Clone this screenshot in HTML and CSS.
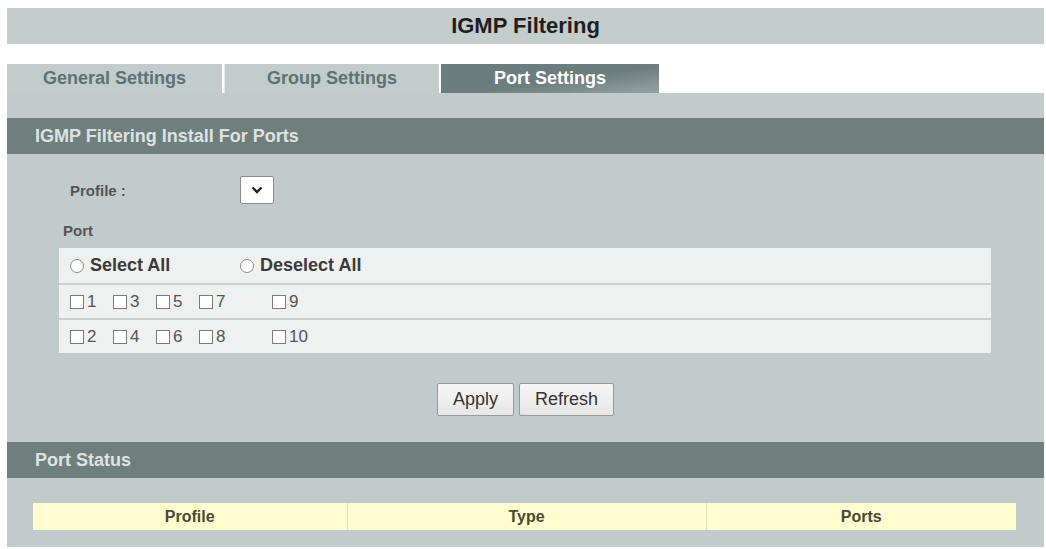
FILE: index.html
```html
<!DOCTYPE html>
<html lang="en">
<head>
    <meta charset="UTF-8">
    <title>IGMP Filtering</title>
    <link rel="stylesheet" href="styles.css">
</head>
<body>
    <div class="page">
        <h1 class="title">IGMP Filtering</h1>

        <ul class="tabs">
            <li>General Settings</li>
            <li>Group Settings</li>
            <li class="active">Port Settings</li>
        </ul>

        <div class="panel">
            <h2 class="section-head">IGMP Filtering Install For Ports</h2>

            <div class="profile-row">
                <span class="label">Profile :</span>
                <span class="select">
                    <svg width="14" height="10" viewBox="0 0 14 10"><polyline points="2.5,2.5 7,7 11.5,2.5" fill="none" stroke="#222" stroke-width="2.4"/></svg>
                </span>
            </div>

            <div class="port-label">Port</div>

            <div class="port-table">
                <div class="port-row">
                    <label class="radio-item"><span class="radio"></span>Select All</label>
                    <label class="radio-item"><span class="radio"></span>Deselect All</label>
                </div>
                <div class="port-row">
                    <label class="check-item"><span class="box"></span>1</label>
                    <label class="check-item"><span class="box"></span>3</label>
                    <label class="check-item"><span class="box"></span>5</label>
                    <label class="check-item"><span class="box"></span>7</label>
                    <label class="check-item far"><span class="box"></span>9</label>
                </div>
                <div class="port-row">
                    <label class="check-item"><span class="box"></span>2</label>
                    <label class="check-item"><span class="box"></span>4</label>
                    <label class="check-item"><span class="box"></span>6</label>
                    <label class="check-item"><span class="box"></span>8</label>
                    <label class="check-item far"><span class="box"></span>10</label>
                </div>
            </div>

            <div class="actions">
                <button type="button">Apply</button>
                <button type="button">Refresh</button>
            </div>

            <h2 class="section-head">Port Status</h2>

            <div class="status-wrap">
                <table class="status">
                    <tr>
                        <th class="c1">Profile</th>
                        <th class="c2">Type</th>
                        <th class="c3">Ports</th>
                    </tr>
                </table>
            </div>
        </div>
    </div>
</body>
</html>
```

FILE: styles.css
```css
* {
    margin: 0;
    padding: 0;
    box-sizing: border-box;
}

body {
    margin: 8px 2px 0 7px;
    background: #fff;
    font-family: 'Liberation Sans', Arial, sans-serif;
    color: #333;
}

.page {
    width: 1037px;
}

.title {
    height: 36px;
    line-height: 36px;
    background: #c4cccc;
    text-align: center;
    font-size: 22px;
    font-weight: bold;
    color: #1e1e1e;
}

.tabs {
    list-style: none;
    display: flex;
    gap: 2px;
    margin-top: 20px;
    height: 29px;
}

.tabs li {
    width: 215px;
    line-height: 29px;
    text-align: center;
    font-size: 18px;
    font-weight: bold;
    color: #5c7373;
    background: #c3cbcb;
}

.tabs li + li {
    border-left: 1px solid #e4e9e9;
}

.tabs li.active {
    width: 218px;
    color: #fff;
    border-left: none;
    background: linear-gradient(172deg, #6c7d7d 55%, #95a3a3);
}

.panel {
    background: #c2cbcb;
    padding: 25px 0 17px;
}

.section-head {
    height: 36px;
    line-height: 36px;
    padding-left: 28px;
    background: #6f7f7e;
    color: #dde3e3;
    font-size: 18px;
    font-weight: bold;
}

.profile-row {
    display: flex;
    align-items: center;
    margin-top: 22px;
    height: 28px;
    padding-left: 63px;
}

.profile-row .label {
    width: 170px;
    font-size: 15px;
    font-weight: bold;
    color: #555;
}

.select {
    width: 34px;
    height: 28px;
    display: flex;
    align-items: center;
    justify-content: center;
    background: #fff;
    border: 1px solid #8c8c8c;
    border-radius: 2px;
}

.port-label {
    margin-top: 17px;
    padding-left: 56px;
    line-height: 20px;
    font-size: 15px;
    font-weight: bold;
    color: #555;
}

.port-table {
    margin: 7px 53px 0 52px;
    background: #eff0f0;
}

.port-row {
    display: flex;
    align-items: center;
    height: 35px;
    padding-left: 11px;
}

.port-row + .port-row {
    border-top: 2px solid #cbd0d0;
}

.radio-item {
    display: flex;
    align-items: center;
    width: 170px;
    font-size: 18px;
    font-weight: bold;
    color: #3a3a3a;
}

.radio {
    width: 14px;
    height: 14px;
    margin-right: 6px;
    border: 1px solid #8a8a8a;
    border-radius: 50%;
    background: #fff;
}

.check-item {
    display: flex;
    align-items: center;
    width: 43px;
    font-size: 17px;
    color: #555;
}

.check-item.far {
    margin-left: 30px;
}

.box {
    width: 14px;
    height: 14px;
    margin-right: 3px;
    border: 1px solid #7a7a7a;
    background: #fff;
}

.actions {
    display: flex;
    justify-content: center;
    gap: 5px;
    margin-top: 30px;
}

.actions button {
    height: 33px;
    padding: 0 15px;
    font-family: inherit;
    font-size: 18px;
    color: #333;
    background: linear-gradient(#f6f6f6, #e6e6e6);
    border: 1px solid #999;
    border-radius: 2px;
}

.actions + .section-head {
    margin-top: 26px;
}

.status-wrap {
    margin: 25px 28px 0 26px;
}

.status {
    width: 100%;
    border-collapse: collapse;
}

.status th {
    height: 27px;
    background: #fdfdd0;
    font-size: 16px;
    font-weight: bold;
    color: #4a4a30;
}

.status th + th {
    border-left: 1px solid #e2e2bc;
}

.status .c1 {
    width: 314px;
}

.status .c2 {
    width: 359px;
}
```
